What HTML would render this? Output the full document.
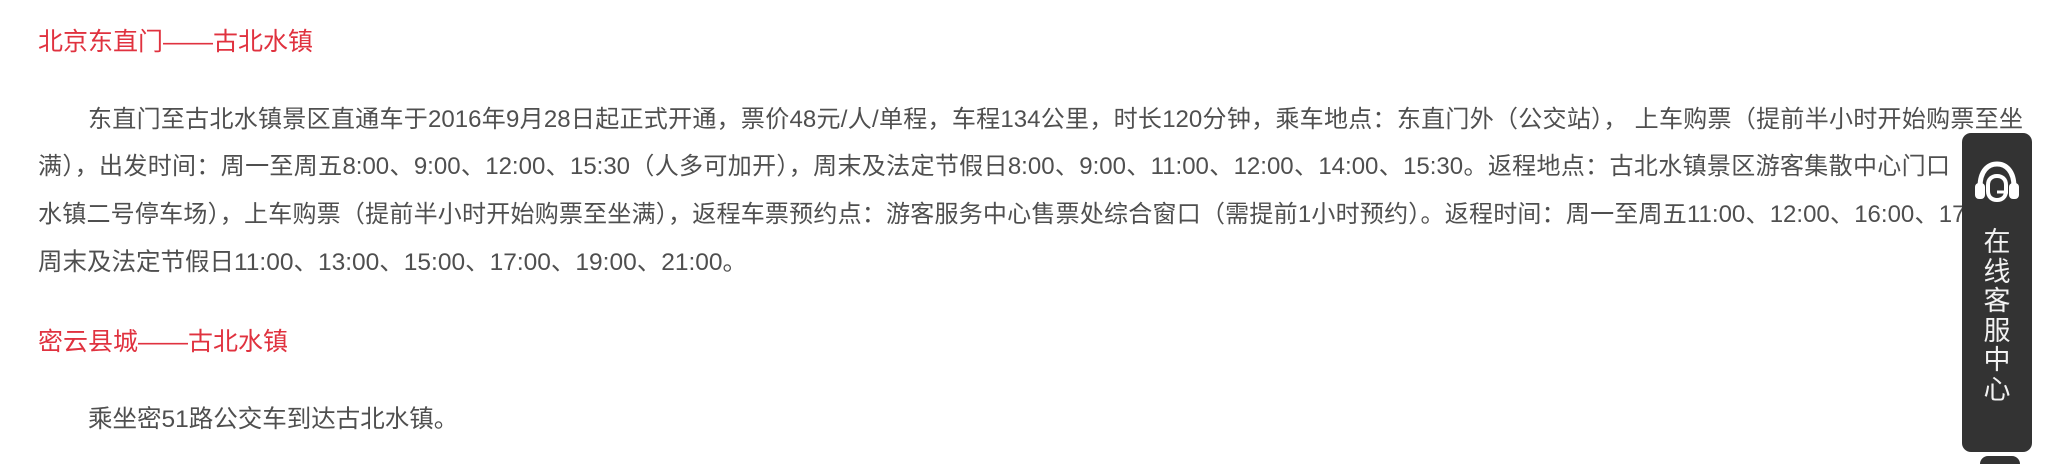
<!DOCTYPE html>
<html><head><meta charset="utf-8"><style>
html,body{margin:0;padding:0;background:#fff;width:2060px;height:464px;overflow:hidden;position:relative}
body{font-family:"Liberation Sans","Noto Sans CJK SC",sans-serif;font-size:24px;color:#4f4f4f}
.h{position:absolute;left:38px;color:#e0323f;font-size:25px;line-height:30px;white-space:nowrap}
.l{position:absolute;left:38px;width:1985px;line-height:30px;white-space:nowrap;text-align:justify;text-align-last:justify}
.l.n{text-align-last:left}
.side{position:absolute;left:1962px;top:133px;width:70px;height:319px;background:#333;border-radius:9px}
.vt{position:absolute;left:0;width:70px;top:95px;color:#f2f2f2;font-size:27px;line-height:29.5px;text-align:center}
.dot{position:absolute;left:1980px;top:456px;width:40px;height:8px;border-radius:20px 20px 0 0;background:#333}
</style></head><body>
<div class="h" style="top:27px">北京东直门——古北水镇</div>
<div class="l" style="top:105px;left:88px;width:1935px">东直门至古北水镇景区直通车于2016年9月28日起正式开通，票价48元/人/单程，车程134公里，时长120分钟，乘车地点：东直门外（公交站）， 上车购票（提前半小时开始购票至坐</div>
<div class="l" style="top:152px">满），出发时间：周一至周五8:00、9:00、12:00、15:30（人多可加开），周末及法定节假日8:00、9:00、11:00、12:00、14:00、15:30。返程地点：古北水镇景区游客集散中心门口（古北</div>
<div class="l" style="top:200px">水镇二号停车场），上车购票（提前半小时开始购票至坐满），返程车票预约点：游客服务中心售票处综合窗口（需提前1小时预约）。返程时间：周一至周五11:00、12:00、16:00、17:00，</div>
<div class="l n" style="top:248px;font-size:24.5px">周末及法定节假日11:00、13:00、15:00、17:00、19:00、21:00。</div>
<div class="h" style="top:327px">密云县城——古北水镇</div>
<div class="l n" style="top:405px;left:88px;font-size:24.5px">乘坐密51路公交车到达古北水镇。</div>
<div class="side">
<svg style="position:absolute;left:10px;top:26px" width="50" height="48" viewBox="0 0 50 48">
<path d="M8 28 C8 12 16 5 25 5 C34 5 42 12 42 28" fill="none" stroke="#fff" stroke-width="5"/>
<rect x="3" y="24" width="10" height="16" rx="4" fill="#fff"/>
<rect x="37" y="24" width="10" height="16" rx="4" fill="#fff"/>
<path d="M16 26 C16 20 20 17 25 17 C30 17 34 20 34 26 L34 32 C34 38 30 41 25 41 C20 41 16 38 16 32 Z" fill="none" stroke="#fff" stroke-width="4"/>
<path d="M25 33 L36 33" stroke="#fff" stroke-width="3"/>
</svg>
<div class="vt">在<br>线<br>客<br>服<br>中<br>心</div>
</div>
<div class="dot"></div>
</body></html>
